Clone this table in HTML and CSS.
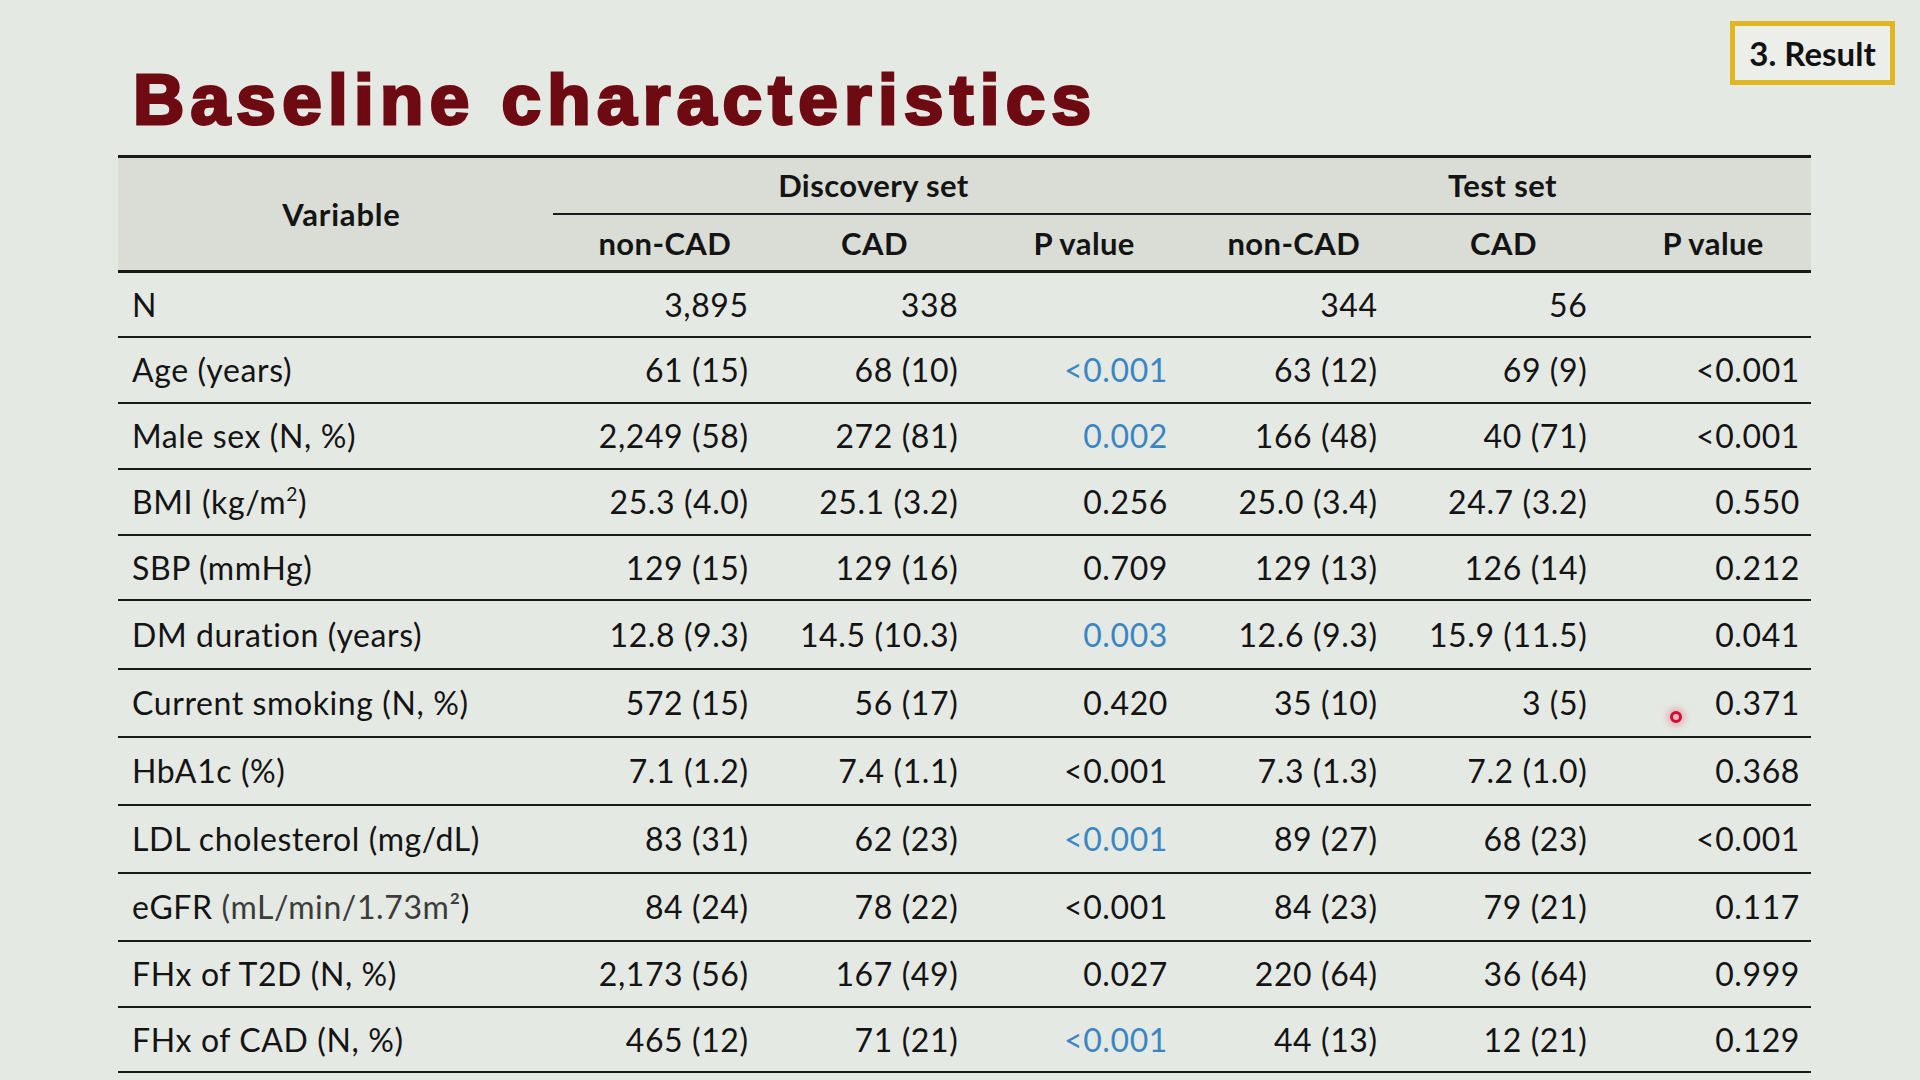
FILE: index.html
```html
<!DOCTYPE html>
<html lang="en">
<head>
<meta charset="utf-8">
<title>Baseline characteristics</title>
<link rel="stylesheet" href="styles.css">
</head>
<body>
<div class="slide">
  <h1 class="title">Baseline characteristics</h1>
  <table class="tbl">
    <colgroup>
      <col class="c-var">
      <col class="c-num"><col class="c-num"><col class="c-num">
      <col class="c-num"><col class="c-num"><col class="c-num">
    </colgroup>
    <thead>
      <tr class="hr1">
        <th rowspan="2" class="h-var">Variable</th>
        <th colspan="3" class="h-grp">Discovery set</th>
        <th colspan="3" class="h-grp">Test set</th>
      </tr>
      <tr class="hr2">
        <th>non-CAD</th><th>CAD</th><th>P value</th>
        <th>non-CAD</th><th>CAD</th><th>P value</th>
      </tr>
    </thead>
    <tbody>
      <tr class="h63"><td>N</td><td>3,895</td><td>338</td><td></td><td>344</td><td>56</td><td></td></tr>
      <tr class="h64"><td>Age (years)</td><td>61 (15)</td><td>68 (10)</td><td class="sig">&lt;0.001</td><td>63 (12)</td><td>69 (9)</td><td>&lt;0.001</td></tr>
      <tr class="h64"><td>Male sex (N, %)</td><td>2,249 (58)</td><td>272 (81)</td><td class="sig">0.002</td><td>166 (48)</td><td>40 (71)</td><td>&lt;0.001</td></tr>
      <tr class="h64"><td>BMI (kg/m<sup>2</sup>)</td><td>25.3 (4.0)</td><td>25.1 (3.2)</td><td>0.256</td><td>25.0 (3.4)</td><td>24.7 (3.2)</td><td>0.550</td></tr>
      <tr class="h63"><td>SBP (mmHg)</td><td>129 (15)</td><td>129 (16)</td><td>0.709</td><td>129 (13)</td><td>126 (14)</td><td>0.212</td></tr>
      <tr class="h67"><td>DM duration (years)</td><td>12.8 (9.3)</td><td>14.5 (10.3)</td><td class="sig">0.003</td><td>12.6 (9.3)</td><td>15.9 (11.5)</td><td>0.041</td></tr>
      <tr class="h66"><td>Current smoking (N, %)</td><td>572 (15)</td><td>56 (17)</td><td>0.420</td><td>35 (10)</td><td>3 (5)</td><td>0.371</td></tr>
      <tr class="h66"><td>HbA1c (%)</td><td>7.1 (1.2)</td><td>7.4 (1.1)</td><td>&lt;0.001</td><td>7.3 (1.3)</td><td>7.2 (1.0)</td><td>0.368</td></tr>
      <tr class="h66"><td>LDL cholesterol (mg/dL)</td><td>83 (31)</td><td>62 (23)</td><td class="sig">&lt;0.001</td><td>89 (27)</td><td>68 (23)</td><td>&lt;0.001</td></tr>
      <tr class="h66"><td>eGFR <span class="unit">(mL/min/1.73m²</span>)</td><td>84 (24)</td><td>78 (22)</td><td>&lt;0.001</td><td>84 (23)</td><td>79 (21)</td><td>0.117</td></tr>
      <tr class="h64"><td>FHx of T2D (N, %)</td><td>2,173 (56)</td><td>167 (49)</td><td>0.027</td><td>220 (64)</td><td>36 (64)</td><td>0.999</td></tr>
      <tr class="h63"><td>FHx of CAD (N, %)</td><td>465 (12)</td><td>71 (21)</td><td class="sig">&lt;0.001</td><td>44 (13)</td><td>12 (21)</td><td>0.129</td></tr>
    </tbody>
  </table>
  <div class="badge">3. Result</div>
  <div class="laser"></div>
</div>
</body>
</html>
```
FILE: styles.css
```css
html, body {
  margin: 0;
  padding: 0;
  background: #e5e9e3;
}

.slide {
  position: relative;
  width: 1920px;
  height: 1080px;
  box-sizing: border-box;
  padding: 64px 109px 0 118px;
  overflow: hidden;
  background: #e5e9e3;
  font-family: Lato, "Open Sans", sans-serif;
  color: #141414;
}

.title {
  margin: 0 0 20px 15px;
  font-family: "Liberation Sans", Arial, sans-serif;
  font-weight: 700;
  font-size: 71px;
  line-height: 71px;
  letter-spacing: 6.3px;
  color: #6e0a12;
  -webkit-text-stroke: 3px #6e0a12;
}

.tbl {
  width: 1693px;
  table-layout: fixed;
  border-collapse: separate;
  border-spacing: 0;
  font-size: 32px;
  letter-spacing: 0.6px;
}

.c-var { width: 435px; }
.c-num { width: 209.66px; }

.tbl th {
  font-weight: 700;
  font-size: 31px;
  letter-spacing: 0.4px;
  padding: 0 0 0 14px;
  text-align: center;
  background: #d9ddd6;
  color: #141414;
}

.hr1 th {
  border-top: 3px solid #1a1a1a;
  line-height: 55px;
}

.hr1 .h-grp {
  border-bottom: 2px solid #1a1a1a;
  padding-left: 12px;
}

.hr1 .h-var {
  border-bottom: 3px solid #1a1a1a;
  padding-left: 12px;
  letter-spacing: 0.8px;
}

.hr2 th {
  line-height: 54px;
  padding-top: 1px;
  border-bottom: 3px solid #1a1a1a;
}

.tbl td {
  padding: 0 14px 0 0;
  text-align: right;
  border-bottom: 2px solid #1a1a1a;
  white-space: nowrap;
}

.tbl td:first-child {
  text-align: left;
  padding: 0 0 0 14px;
}

.tbl td:last-child {
  padding-right: 11px;
}

.h63 td { line-height: 63px; }
.h64 td { line-height: 64px; }
.h66 td { line-height: 66px; }
.h67 td { line-height: 67px; }

.sig {
  color: #3a86c3;
}

.unit {
  color: #3c3c3c;
}

sup {
  font-size: 60%;
  line-height: 0;
  vertical-align: 0.7em;
}

.badge {
  position: absolute;
  left: 1730px;
  top: 21px;
  width: 165px;
  height: 64px;
  box-sizing: border-box;
  border: 5px solid #e0b723;
  background: #eceee9;
  display: flex;
  align-items: center;
  justify-content: center;
  font-weight: 700;
  font-size: 33px;
  color: #111;
}

.laser {
  position: absolute;
  left: 1670px;
  top: 711px;
  width: 12px;
  height: 12px;
  box-sizing: border-box;
  border-radius: 50%;
  border: 3px solid #d0102e;
  background: #f3b6c0;
  box-shadow: 0 0 6px 3px rgba(230, 40, 70, 0.3);
}
```
